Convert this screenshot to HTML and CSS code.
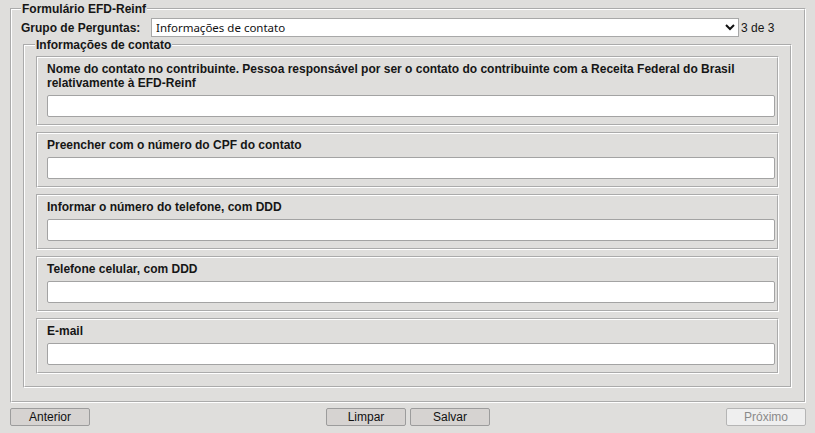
FILE: index.html
```html
<!DOCTYPE html>
<html lang="pt-BR">
<head>
<meta charset="utf-8">
<title>Formulário EFD-Reinf</title>
<link rel="stylesheet" href="styles.css">
</head>
<body>
<div class="page">
  <fieldset class="form">
    <legend class="form-legend">Formulário EFD-Reinf</legend>
    <div class="group-row">
      <label class="group-label" for="grupo">Grupo de Perguntas:</label>
      <select id="grupo" class="group-select">
        <option>Informações de contato</option>
      </select>
      <span class="group-count">3 de 3</span>
    </div>
    <fieldset class="section">
      <legend class="section-legend">Informações de contato</legend>
      <div class="questions">
        <div class="card">
          <label class="question">Nome do contato no contribuinte. Pessoa responsável por ser o contato do contribuinte com a Receita Federal do Brasil relativamente à EFD-Reinf</label>
          <input class="answer" type="text">
        </div>
        <div class="card">
          <label class="question">Preencher com o número do CPF do contato</label>
          <input class="answer" type="text">
        </div>
        <div class="card">
          <label class="question">Informar o número do telefone, com DDD</label>
          <input class="answer" type="text">
        </div>
        <div class="card">
          <label class="question">Telefone celular, com DDD</label>
          <input class="answer" type="text">
        </div>
        <div class="card">
          <label class="question">E-mail</label>
          <input class="answer" type="text">
        </div>
      </div>
    </fieldset>
  </fieldset>
  <div class="actions">
    <button class="btn" type="button">Anterior</button>
    <div class="actions-center">
      <button class="btn" type="button">Limpar</button>
      <button class="btn" type="button">Salvar</button>
    </div>
    <button class="btn" type="button" disabled>Próximo</button>
  </div>
</div>
</body>
</html>
```

FILE: styles.css
```css
html, body {
  margin: 0;
  padding: 0;
}

body {
  background: #dfdedc;
  font-family: "Liberation Sans", Arial, sans-serif;
  font-size: 12px;
  color: #161616;
  width: 815px;
  height: 433px;
  overflow: hidden;
}

.page {
  padding: 2px 9px 0 10px;
}

.form,
.section {
  margin: 0;
  border: 2px groove #ffffff;
  min-width: 0;
}

.form {
  padding: 2px 12px 13px 11px;
}

.section {
  margin-top: 1px;
  padding: 4px 11px 12px 11px;
}

.form-legend,
.section-legend {
  font-weight: bold;
  font-size: 12px;
  line-height: 14px;
  padding: 0 1px;
}

.form-legend {
  margin-left: -2px;
}

.section-legend {
  margin-left: -1px;
}

.group-row {
  display: flex;
  align-items: center;
  height: 19px;
}

.group-label {
  font-weight: bold;
  width: 130px;
  margin-left: -2px;
  line-height: 14px;
}

.group-select {
  width: 588px;
  height: 19px;
  margin: 0;
  padding: 0;
  font-family: "Noto Sans", "Open Sans", sans-serif;
  font-size: 11.5px;
  color: #111;
  background-color: #ffffff;
  border: 1px solid #a8a8a8;
  border-radius: 0;
}

.group-count {
  margin-left: 2px;
}

.questions {
  display: flex;
  flex-direction: column;
  gap: 6px;
}

.card {
  border: 2px groove #ffffff;
  padding: 4px 2px 7px 9px;
}

.question {
  display: block;
  font-weight: bold;
  line-height: 14px;
}

.answer {
  display: block;
  box-sizing: border-box;
  width: 100%;
  height: 22px;
  margin: 5px 0 0 0;
  padding: 0 4px;
  border: 1px solid #a3a3a3;
  border-radius: 2px;
  background: #ffffff;
  font-family: "Liberation Sans", Arial, sans-serif;
  font-size: 12px;
  outline: none;
}

.actions {
  display: flex;
  justify-content: space-between;
  align-items: center;
  margin-top: 5px;
}

.actions-center {
  display: flex;
  gap: 4px;
}

.btn {
  width: 80px;
  height: 18px;
  margin: 0;
  padding: 0;
  font-family: "Liberation Sans", Arial, sans-serif;
  font-size: 12px;
  line-height: 16px;
  color: #111;
  background: #d6d3d1;
  border: 1px solid #9c9c9c;
  border-radius: 2px;
}

.btn:disabled {
  color: #8a8a8a;
  background: #efefef;
  border-color: #b5b5b5;
}
```
